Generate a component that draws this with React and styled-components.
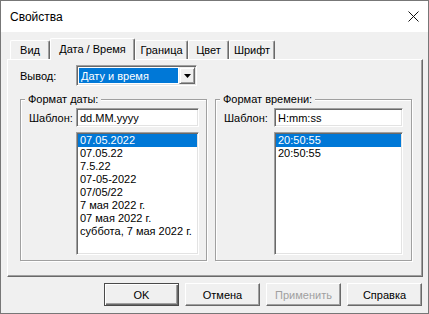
import styled, { createGlobalStyle } from "styled-components"

const GlobalStyle = createGlobalStyle`
  html, body { margin: 0; padding: 0; background: #fff; }
  body {
    font-family: "Liberation Sans", Arial, sans-serif;
    font-size: 11px;
    color: #000;
  }
  * { box-sizing: border-box; }
`

const tabs = [
  { label: "Вид", w: 40 },
  { label: "Дата / Время", w: 85, active: true },
  { label: "Граница", w: 53 },
  { label: "Цвет", w: 41 },
  { label: "Шрифт", w: 46 },
]

const dateFormats = [
  "07.05.2022",
  "07.05.22",
  "7.5.22",
  "07-05-2022",
  "07/05/22",
  "7 мая 2022 г.",
  "07 мая 2022 г.",
  "суббота, 7 мая 2022 г.",
]

const timeFormats = ["20:50:55", "20:50:55"]

export default function App() {
  return (
    <>
      <GlobalStyle />
      <Window>
        <TitleBar>
          <Title>Свойства</Title>
          <svg width="11" height="11" viewBox="0 0 11 11">
            <path d="M0.5 0.5 L10.5 10.5 M10.5 0.5 L0.5 10.5" stroke="#111" strokeWidth="1" />
          </svg>
        </TitleBar>
        <Body>
          <TabRow>
            {tabs.map((t) => (
              <Tab key={t.label} w={t.w} active={t.active}>
                {t.label}
              </Tab>
            ))}
          </TabRow>
          <Panel>
            <OutputRow>
              <FieldLabel w={56}>Вывод:</FieldLabel>
              <Combo>
                <ComboValue>Дату и время</ComboValue>
                <ComboButton>
                  <svg width="7" height="4" viewBox="0 0 7 4">
                    <path d="M0 0 H7 L3.5 4 Z" fill="#000" />
                  </svg>
                </ComboButton>
              </Combo>
            </OutputRow>
            <GroupRow>
              <Group w={187}>
                <Legend>Формат даты:</Legend>
                <GroupGrid labelW={47} fieldW={123}>
                  <span>Шаблон:</span>
                  <TextBox>dd.MM.yyyy</TextBox>
                  <ListBox>
                    {dateFormats.map((f, i) => (
                      <ListItem key={i} selected={i === 0}>{f}</ListItem>
                    ))}
                  </ListBox>
                </GroupGrid>
              </Group>
              <Group w={197}>
                <Legend>Формат времени:</Legend>
                <GroupGrid labelW={50} fieldW={129}>
                  <span>Шаблон:</span>
                  <TextBox>H:mm:ss</TextBox>
                  <ListBox>
                    {timeFormats.map((f, i) => (
                      <ListItem key={i} selected={i === 0}>{f}</ListItem>
                    ))}
                  </ListBox>
                </GroupGrid>
              </Group>
            </GroupRow>
          </Panel>
          <ButtonRow>
            <Button isDefault>OK</Button>
            <Button>Отмена</Button>
            <Button disabled>Применить</Button>
            <Button>Справка</Button>
          </ButtonRow>
        </Body>
      </Window>
    </>
  )
}

const Window = styled.div`
  width: 429px;
  height: 314px;
  border: 1px solid #777;
  display: flex;
  flex-direction: column;
  background: #f0f0f0;
`

const TitleBar = styled.div`
  height: 31px;
  flex: none;
  background: #fff;
  display: flex;
  align-items: center;
  justify-content: space-between;
  padding: 0 9px 0 9px;
`

const Title = styled.span`
  font-size: 12px;
`

const Body = styled.div`
  flex: 1;
  display: flex;
  flex-direction: column;
  padding: 6px 5px 7px 6px;
`

const TabRow = styled.div`
  height: 21px;
  display: flex;
  align-items: flex-end;
  padding-left: 3px;
`

const Tab = styled.div`
  width: ${(p) => p.w}px;
  height: ${(p) => (p.active ? 22 : 19)}px;
  margin-bottom: ${(p) => (p.active ? -1 : 0)}px;
  padding-bottom: ${(p) => (p.active ? 2 : 0)}px;
  background: #f0f0f0;
  border-top: 1px solid #fff;
  border-left: 1px solid #fff;
  border-right: 1px solid #696969;
  box-shadow: inset -1px 0 0 #a0a0a0;
  border-radius: 2px 2px 0 0;
  display: flex;
  align-items: center;
  justify-content: center;
  white-space: nowrap;
  position: relative;
  z-index: ${(p) => (p.active ? 2 : 0)};
`

const Panel = styled.div`
  height: 218px;
  flex: none;
  background: #f0f0f0;
  border-top: 1px solid #fff;
  border-left: 1px solid #fff;
  border-right: 1px solid #696969;
  border-bottom: 1px solid #696969;
  box-shadow: inset -1px -1px 0 #a0a0a0;
  padding: 5px 0 0 12px;
`

const OutputRow = styled.div`
  display: flex;
  align-items: center;
  height: 21px;
`

const FieldLabel = styled.span`
  width: ${(p) => p.w}px;
`

const sunken = `
  border-style: solid;
  border-width: 1px;
  border-color: #a0a0a0 #fff #fff #a0a0a0;
  box-shadow: inset 1px 1px 0 #696969, inset -1px -1px 0 #e3e3e3;
  background: #fff;
`

const Combo = styled.div`
  ${sunken}
  width: 121px;
  height: 21px;
  display: flex;
  padding: 1px;
`

const ComboValue = styled.div`
  flex: 1;
  margin: 1px;
  background: #0078d7;
  color: #fff;
  padding-left: 2px;
  display: flex;
  align-items: center;
`

const ComboButton = styled.div`
  width: 16px;
  background: #f0f0f0;
  border-style: solid;
  border-width: 1px;
  border-color: #f0f0f0 #696969 #696969 #f0f0f0;
  box-shadow: inset 1px 1px 0 #fff, inset -1px -1px 0 #a0a0a0;
  display: flex;
  align-items: center;
  justify-content: center;
`

const GroupRow = styled.div`
  display: flex;
  gap: 8px;
  margin-top: 7px;
`

const Group = styled.fieldset`
  width: ${(p) => p.w}px;
  height: 168px;
  margin: 0;
  min-width: 0;
  padding: 0 0 0 8px;
  border: 1px solid #a0a0a0;
  box-shadow: inset 1px 1px 0 #fff, 1px 1px 0 #fff;
`

const Legend = styled.legend`
  padding: 0 3px;
  margin-left: -4px;
  line-height: 13px;
  background: #f0f0f0;
`

const GroupGrid = styled.div`
  display: grid;
  grid-template-columns: ${(p) => p.labelW}px ${(p) => p.fieldW}px;
  row-gap: 5px;
  align-items: center;
  margin-top: 2px;
  & > ul { grid-column: 2; }
`

const TextBox = styled.div`
  ${sunken}
  height: 19px;
  padding-left: 3px;
  display: flex;
  align-items: center;
`

const ListBox = styled.ul`
  ${sunken}
  height: 123px;
  margin: 0;
  padding: 1px;
  list-style: none;
`

const ListItem = styled.li`
  height: 13px;
  line-height: 13px;
  padding-left: 2px;
  white-space: nowrap;
  background: ${(p) => (p.selected ? "#0078d7" : "transparent")};
  color: ${(p) => (p.selected ? "#fff" : "#000")};
`

const ButtonRow = styled.div`
  display: flex;
  justify-content: flex-end;
  gap: 6px;
  margin-top: 6px;
  margin-right: 1px;
`

const Button = styled.button`
  width: 75px;
  height: 23px;
  padding: 0;
  font-family: "Liberation Sans", Arial, sans-serif;
  font-size: 11px;
  font-weight: 400;
  background: #f0f0f0;
  color: ${(p) => (p.disabled ? "#a0a0a0" : "#000")};
  border-style: solid;
  border-width: 1px;
  border-color: ${(p) => (p.isDefault ? "#4a4a4a" : "#fff #696969 #696969 #fff")};
  box-shadow: ${(p) =>
    p.isDefault
      ? "inset 1px 1px 0 #fff, inset -1px -1px 0 #696969, inset -2px -2px 0 #a0a0a0"
      : "inset -1px -1px 0 #a0a0a0"};
`
